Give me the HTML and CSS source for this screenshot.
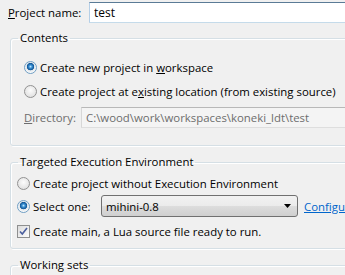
FILE: index.html
```html
<!DOCTYPE html>
<html lang="en">
<head>
    <meta charset="UTF-8">
    <title>New Lua Project</title>
    <link rel="stylesheet" href="styles.css">
</head>
<body>
    <div class="page">
        <div class="name-row">
            <label for="projectName"><u>P</u>roject name:</label>
            <input type="text" id="projectName" class="text-field focused" value="test">
        </div>

        <fieldset class="group contents">
            <legend>Contents</legend>
            <div class="group-body">
                <label class="option">
                    <input type="radio" name="location" checked>
                    <span>Create new project in <u>w</u>orkspace</span>
                </label>
                <label class="option">
                    <input type="radio" name="location">
                    <span>Create project at e<u>x</u>isting location (from existing source)</span>
                </label>
                <div class="dir-row">
                    <span class="disabled-label"><u>D</u>irectory:</span>
                    <input type="text" class="text-field disabled" value="C:\wood\work\workspaces\koneki_ldt\test" disabled>
                </div>
            </div>
        </fieldset>

        <fieldset class="group env">
            <legend>Targeted Execution Environment</legend>
            <div class="group-body">
                <label class="option">
                    <input type="radio" name="env">
                    <span>Create project without Execution Environment</span>
                </label>
                <div class="select-row">
                    <label class="option">
                        <input type="radio" name="env" checked>
                        <span>Select one:</span>
                    </label>
                    <div class="combo">
                        <span>mihini-0.8</span>
                        <svg class="arrow" width="7" height="4" viewBox="0 0 7 4"><path d="M0 0h7L3.5 4z" fill="#000"/></svg>
                    </div>
                    <a href="#" class="link">Configure...</a>
                </div>
                <label class="option">
                    <span class="checkbox">
                        <svg width="9" height="9" viewBox="0 0 9 9"><path d="M1 4.5l2.3 2.6L8 1" fill="none" stroke="#4b5f9e" stroke-width="1.6"/></svg>
                    </span>
                    <span>Create main, a Lua source file ready to run.</span>
                </label>
            </div>
        </fieldset>

        <fieldset class="group sets">
            <legend>Working sets</legend>
            <div class="group-body"></div>
        </fieldset>
    </div>
</body>
</html>
```

FILE: styles.css
```css
body {
    margin: 0;
    background: #f0f0f0;
    font-family: 'Open Sans', 'Noto Sans', sans-serif;
    font-size: 11.4px;
    color: #000;
    overflow: hidden;
}

.page {
    width: 420px;
}

u {
    text-decoration: underline;
    text-underline-offset: 1px;
}

.name-row {
    display: flex;
    align-items: center;
    height: 24px;
    padding-left: 8px;
}

.name-row label {
    width: 81px;
}

.text-field {
    flex: 1;
    height: 21px;
    box-sizing: border-box;
    padding: 0 4px;
    font: inherit;
    font-size: 12px;
    background: #fff;
    border: 1px solid #abadb3;
    border-color: #abadb3 #dbdfe6 #e3e9ef #e2e3ea;
    outline: none;
}

.text-field.focused {
    border-color: #5a7b96 #b5cfe7 #c5dbea #b5cfe7;
}

.text-field.disabled {
    font-size: 11.4px;
    background: #f4f4f4;
    border-color: #b8b8b8 #d7d7d7 #dedede #d7d7d7;
    color: #6d6d6d;
}

.group {
    margin: 6px 0 0 10px;
    padding: 0;
    border: 1px solid #d5dfe5;
    border-radius: 3px;
    box-shadow: inset 1px 1px 0 #fff, 1px 1px 0 #fff;
}

.group + .group {
    margin-top: 8px;
}

.group legend {
    margin-left: 7px;
    padding: 0 2px;
    line-height: 16px;
}

.option {
    display: flex;
    align-items: center;
    height: 20px;
    gap: 3px;
}

.option input[type="radio"] {
    appearance: none;
    margin: 0;
    width: 13px;
    height: 13px;
    border-radius: 50%;
    border: 1px solid #929292;
    background: radial-gradient(circle at 50% 40%, #fcfcfc, #d9d9d9);
}

.option input[type="radio"]:checked {
    border-color: #6f9ec4;
    background: radial-gradient(circle at 50% 42%, #c8ecff 0, #3d93d6 1.5px, #0f5596 3.4px, #dfe6ec 4px, #fafafa 6px);
}

.checkbox {
    display: flex;
    align-items: center;
    justify-content: center;
    width: 13px;
    height: 13px;
    box-sizing: border-box;
    border: 1px solid #8e8f8f;
    background: linear-gradient(135deg, #dcdcdc, #fcfcfc);
}

.contents .group-body {
    padding: 11px 0 17px 13px;
}

.contents .option + .option {
    margin-top: 4px;
}

.dir-row {
    display: flex;
    align-items: center;
    margin-top: 5px;
    height: 22px;
}

.disabled-label {
    width: 57px;
    color: #6d6d6d;
}

.env .group-body {
    padding: 3px 0 7px 6px;
}

.select-row {
    display: flex;
    align-items: center;
    height: 22px;
    margin: 2px 0 4px;
}

.select-row .option {
    width: 84px;
}

.combo {
    display: flex;
    align-items: center;
    justify-content: space-between;
    width: 197px;
    height: 22px;
    box-sizing: border-box;
    padding: 0 6px 0 4px;
    border: 1px solid #707070;
    border-radius: 3px;
    background: linear-gradient(#f2f2f2 0, #ebebeb 50%, #dddddd 51%, #cfcfcf 100%);
}

.link {
    margin-left: 6px;
    color: #0066cc;
}

.sets .group-body {
    height: 20px;
}
```
